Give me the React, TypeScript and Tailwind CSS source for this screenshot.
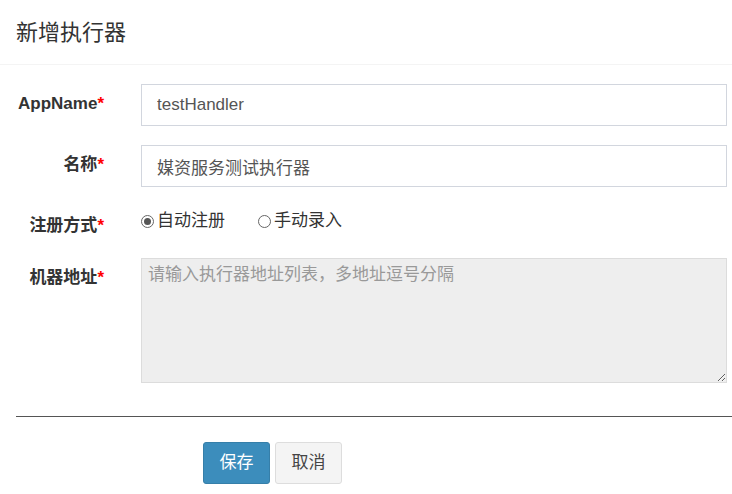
import React, { useState } from 'react';

const font = { fontFamily: '"Liberation Sans", "Noto Sans CJK SC", sans-serif' };

function Label({ text }: { text: string }) {
  return (
    <div className="w-[141px] shrink-0 pr-[37px] pt-[8px] text-right text-[17px] leading-[24px] font-bold text-[#333]">
      {text}
      <span className="text-[#ff0000]">*</span>
    </div>
  );
}

function Radio({ checked, label, onClick }: { checked: boolean; label: string; onClick: () => void }) {
  return (
    <label onClick={onClick} className="flex items-center cursor-pointer text-[17px] leading-[24px] text-[#333]">
      <span className="mr-[3px] flex h-[13px] w-[13px] items-center justify-center rounded-full border border-[#666] bg-white">
        {checked && <span className="h-[7px] w-[7px] rounded-full bg-[#555]" />}
      </span>
      {label}
    </label>
  );
}

export default function App() {
  const [mode, setMode] = useState(0);

  return (
    <div className="h-[494px] w-[732px] overflow-hidden bg-white" style={font}>
      {/* Header */}
      <div className="border-b border-[#f4f4f4] px-[16px] pt-[18px] pb-[17px]">
        <h4 className="text-[22px] leading-[29px] text-[#333]">新增执行器</h4>
      </div>

      {/* Form */}
      <div className="pt-[19px]">
        <div className="flex mb-[19px]">
          <Label text="AppName" />
          <input
            defaultValue="testHandler"
            className="mr-[5px] h-[42px] flex-1 border border-[#d2d6de] px-[15px] text-[17px] text-[#555] outline-none"
          />
        </div>

        <div className="flex mb-[19px]">
          <Label text="名称" />
          <input
            defaultValue="媒资服务测试执行器"
            className="mr-[5px] h-[42px] flex-1 border border-[#d2d6de] px-[15px] text-[17px] text-[#555] outline-none"
          />
        </div>

        <div className="flex mb-[20px]">
          <Label text="注册方式" />
          <div className="flex items-start gap-[33px] pt-[3px]">
            <Radio checked={mode === 0} label="自动注册" onClick={() => setMode(0)} />
            <Radio checked={mode === 1} label="手动录入" onClick={() => setMode(1)} />
          </div>
        </div>

        <div className="flex">
          <Label text="机器地址" />
          <textarea
            readOnly
            placeholder="请输入执行器地址列表，多地址逗号分隔"
            className="mr-[5px] h-[125px] flex-1 border border-[#dcdcdc] bg-[#eeeeee] px-[6px] py-[4px] text-[17px] leading-[24px] text-[#555] outline-none placeholder:text-[#999]"
          />
        </div>
      </div>

      <div className="ml-[16px] mt-[33px] h-px bg-[#555]" />

      {/* Footer buttons */}
      <div className="flex gap-[5px] pl-[203px] pt-[25px]">
        <button className="h-[42px] w-[67px] rounded-[3px] border border-[#367fa9] bg-[#3c8dbc] text-[17px] text-white">
          保存
        </button>
        <button className="h-[42px] w-[67px] rounded-[3px] border border-[#ddd] bg-[#f4f4f4] text-[17px] text-[#444]">
          取消
        </button>
      </div>
    </div>
  );
}
